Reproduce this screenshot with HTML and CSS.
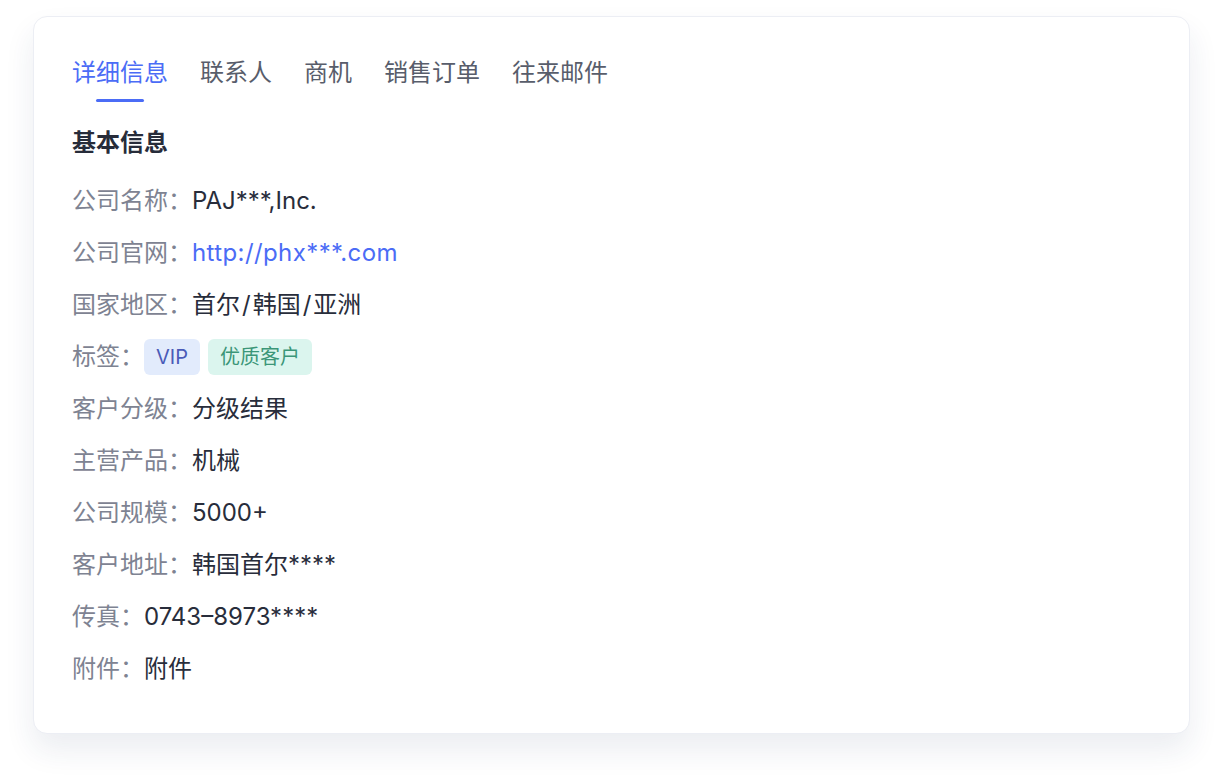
FILE: index.html
```html
<!DOCTYPE html>
<html lang="zh-CN">
<head>
<meta charset="utf-8">
<title>详细信息</title>
<link rel="stylesheet" href="styles.css">
</head>
<body>
<div class="page">
<div class="card">
  <div class="tabs">
    <div class="tab active">详细信息</div>
    <div class="tab">联系人</div>
    <div class="tab">商机</div>
    <div class="tab">销售订单</div>
    <div class="tab">往来邮件</div>
  </div>
  <h2 class="section-title">基本信息</h2>
  <div class="rows">
    <div class="row"><span class="label">公司名称：</span><span class="value">PAJ***,Inc.</span></div>
    <div class="row"><span class="label">公司官网：</span><span class="value link">http://phx***.com</span></div>
    <div class="row"><span class="label">国家地区：</span><span class="value">首尔<span class="slash">/</span>韩国<span class="slash">/</span>亚洲</span></div>
    <div class="row"><span class="label">标签：</span><span class="tags"><span class="tag tag-blue">VIP</span><span class="tag tag-green">优质客户</span></span></div>
    <div class="row"><span class="label">客户分级：</span><span class="value">分级结果</span></div>
    <div class="row"><span class="label">主营产品：</span><span class="value">机械</span></div>
    <div class="row"><span class="label">公司规模：</span><span class="value">5000+</span></div>
    <div class="row"><span class="label">客户地址：</span><span class="value">韩国首尔****</span></div>
    <div class="row"><span class="label">传真：</span><span class="value">0743–8973****</span></div>
    <div class="row"><span class="label">附件：</span><span class="value">附件</span></div>
  </div>
</div>
</div>
</body>
</html>
```

FILE: styles.css
```css
* { box-sizing: border-box; }
html, body { margin: 0; padding: 0; background: #ffffff; }
body {
  font-family: "Inter", "Noto Sans CJK SC", sans-serif;
  color: #272c3a;
}
.page {
  min-height: 784px;
  padding: 16px 0 0 33px;
}
.card {
  width: 1157px;
  height: 718px;
  border: 1px solid #eceef4;
  border-radius: 14px;
  background: #ffffff;
  box-shadow: 0 16px 30px rgba(35, 50, 100, 0.09);
  padding: 40px 39px 0 38px;
}
.tabs {
  display: flex;
  gap: 32px;
}
.tab {
  display: flex;
  flex-direction: column;
  align-items: center;
  font-size: 24px;
  line-height: 32px;
  color: #585d6b;
}
.tab::after {
  content: "";
  display: block;
  width: 48px;
  height: 3px;
  margin-top: 10px;
  border-radius: 2px;
  background: transparent;
}
.tab.active { color: #4b6cf6; }
.tab.active::after { background: #4b6cf6; }
.section-title {
  margin: 25px 0 0 0;
  font-size: 24px;
  line-height: 32px;
  font-weight: 700;
  color: #272c3a;
}
.rows {
  margin-top: 26px;
  display: flex;
  flex-direction: column;
  gap: 20px;
}
.row {
  display: flex;
  align-items: center;
  height: 32px;
  font-size: 24px;
  line-height: 32px;
}
.label { color: #7e8392; }
.value { color: #282d3b; }
.value.link { color: #4b6cf6; letter-spacing: 0.4px; }
.slash { padding: 0 2px; }
.tags { display: flex; gap: 8px; }
.tag {
  display: inline-flex;
  align-items: center;
  height: 36px;
  padding: 0 12px;
  border-radius: 6px;
  font-size: 20px;
}
.tag-blue { background: #e2ebfc; color: #4a5bb8; }
.tag-green { background: #dbf5ee; color: #3b9678; }
```
